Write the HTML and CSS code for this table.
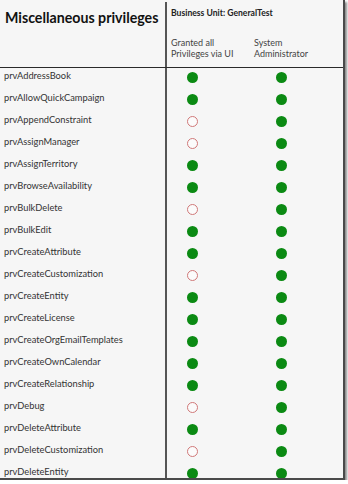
FILE: index.html
```html
<!DOCTYPE html>
<html>
<head>
<meta charset="utf-8">
<link rel="stylesheet" href="styles.css">
</head>
<body>
<div class="frame">
  <div class="head">
    <div class="head-left"><span class="title">Miscellaneous privileges</span></div>
    <div class="head-right">
      <div class="bu">Business Unit: GeneralTest</div>
      <div class="cols">
        <div class="colname c1">Granted all<br>Privileges via UI</div>
        <div class="colname c2">System<br>Administrator</div>
      </div>
    </div>
  </div>
  <div class="rows">
    <div class="row"><div class="name">prvAddressBook</div><div class="cells"><span class="dot on"></span><span class="dot on"></span></div></div>
    <div class="row"><div class="name">prvAllowQuickCampaign</div><div class="cells"><span class="dot on"></span><span class="dot on"></span></div></div>
    <div class="row"><div class="name">prvAppendConstraint</div><div class="cells"><span class="dot off"></span><span class="dot on"></span></div></div>
    <div class="row"><div class="name">prvAssignManager</div><div class="cells"><span class="dot off"></span><span class="dot on"></span></div></div>
    <div class="row"><div class="name">prvAssignTerritory</div><div class="cells"><span class="dot on"></span><span class="dot on"></span></div></div>
    <div class="row"><div class="name">prvBrowseAvailability</div><div class="cells"><span class="dot on"></span><span class="dot on"></span></div></div>
    <div class="row"><div class="name">prvBulkDelete</div><div class="cells"><span class="dot off"></span><span class="dot on"></span></div></div>
    <div class="row"><div class="name">prvBulkEdit</div><div class="cells"><span class="dot on"></span><span class="dot on"></span></div></div>
    <div class="row"><div class="name">prvCreateAttribute</div><div class="cells"><span class="dot on"></span><span class="dot on"></span></div></div>
    <div class="row"><div class="name">prvCreateCustomization</div><div class="cells"><span class="dot off"></span><span class="dot on"></span></div></div>
    <div class="row"><div class="name">prvCreateEntity</div><div class="cells"><span class="dot on"></span><span class="dot on"></span></div></div>
    <div class="row"><div class="name">prvCreateLicense</div><div class="cells"><span class="dot on"></span><span class="dot on"></span></div></div>
    <div class="row"><div class="name">prvCreateOrgEmailTemplates</div><div class="cells"><span class="dot on"></span><span class="dot on"></span></div></div>
    <div class="row"><div class="name">prvCreateOwnCalendar</div><div class="cells"><span class="dot on"></span><span class="dot on"></span></div></div>
    <div class="row"><div class="name">prvCreateRelationship</div><div class="cells"><span class="dot on"></span><span class="dot on"></span></div></div>
    <div class="row"><div class="name">prvDebug</div><div class="cells"><span class="dot off"></span><span class="dot on"></span></div></div>
    <div class="row"><div class="name">prvDeleteAttribute</div><div class="cells"><span class="dot on"></span><span class="dot on"></span></div></div>
    <div class="row"><div class="name">prvDeleteCustomization</div><div class="cells"><span class="dot off"></span><span class="dot on"></span></div></div>
    <div class="row"><div class="name">prvDeleteEntity</div><div class="cells"><span class="dot on"></span><span class="dot on"></span></div></div>
  </div>
</div>
</body>
</html>
```
FILE: styles.css
```css
html, body {
  margin: 0;
  padding: 0;
  background: #ffffff;
}
body {
  font-family: Lato, "Liberation Sans", sans-serif;
}
.frame {
  box-sizing: border-box;
  width: 345px;
  height: 480px;
  background: #f6f6f6;
  border-right: 2px solid #4a4a4a;
  border-bottom: 2px solid #4a4a4a;
  box-shadow: 2px 2px 2px rgba(0, 0, 0, 0.45);
  overflow: hidden;
}
.head {
  display: flex;
  height: 67px;
  border-bottom: 1px solid #2a2a2a;
}
.head-left {
  box-sizing: border-box;
  width: 167px;
  padding: 5px 0 0 5px;
  border-right: 2px solid #555;
  margin-top: 2px;
}
.title {
  font-size: 14.2px;
  font-weight: 700;
  color: #111;
}
.head-right {
  flex: 1;
  padding-left: 4px;
  color: #333;
}
.bu {
  font-size: 8.6px;
  font-weight: 700;
  margin-top: 8px;
  color: #222;
}
.cols {
  display: flex;
  margin-top: 19px;
}
.colname {
  font-size: 9px;
  line-height: 11px;
  color: #444;
}
.c1 { width: 83px; }
.rows {
  display: flex;
  flex-direction: column;
}
.row {
  display: flex;
  height: 22px;
  flex-shrink: 0;
}
.name {
  box-sizing: border-box;
  width: 167px;
  padding: 2px 0 0 4px;
  font-size: 9.3px;
  line-height: 12px;
  color: #333;
  border-right: 2px solid #555;
}
.cells {
  display: flex;
  padding: 4px 0 0 20px;
  gap: 78px;
}
.dot {
  box-sizing: border-box;
  width: 11px;
  height: 11px;
  border-radius: 50%;
}
.dot.on {
  background: #0b8a13;
}
.dot.off {
  border: 1.3px solid #d07878;
  background: #fbfbfb;
}
```
